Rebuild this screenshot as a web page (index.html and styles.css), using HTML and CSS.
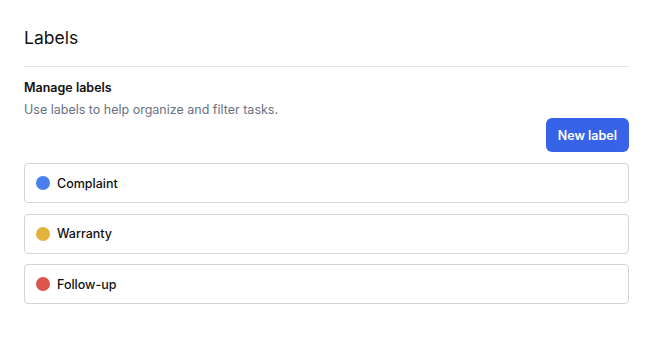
FILE: index.html
```html
<!DOCTYPE html>
<html lang="en">

<head>
  <meta charset="UTF-8">
  <title>Labels</title>
  <link rel="stylesheet" href="styles.css">
</head>

<body>
  <div class="settings-page">
    <h1 class="page-title">Labels</h1>
    <div class="section">
      <div class="section-head">
        <h2 class="section-title">Manage labels</h2>
        <p class="section-desc">Use labels to help organize and filter tasks.</p>
      </div>
      <div class="section-actions">
        <button class="btn-primary" type="button">New label</button>
      </div>
      <ul class="label-list">
        <li class="label-item">
          <span class="label-dot dot-blue"></span>
          <span class="label-name">Complaint</span>
        </li>
        <li class="label-item">
          <span class="label-dot dot-yellow"></span>
          <span class="label-name">Warranty</span>
        </li>
        <li class="label-item">
          <span class="label-dot dot-red"></span>
          <span class="label-name">Follow-up</span>
        </li>
      </ul>
    </div>
  </div>
</body>

</html>
```

FILE: styles.css
```css
* {
  box-sizing: border-box;
}
body {
  margin: 0;
  background-color: #ffffff;
  font-family: Inter, "Noto Sans", sans-serif;
  color: #111111;
}
.settings-page {
  width: 605px;
  margin-left: 24px;
  padding-top: 24px;
}
.page-title {
  margin: 0;
  font-size: 17.5px;
  line-height: 28px;
  font-weight: 400;
  padding-bottom: 14px;
  border-bottom: 1px solid #e4e4e7;
}
.section-head {
  margin-top: 11px;
}
.section-title {
  margin: 0;
  font-size: 12.5px;
  line-height: 20px;
  font-weight: 600;
}
.section-desc {
  margin: 4px 0 0;
  font-size: 12.5px;
  line-height: 16px;
  color: #6b7280;
}
.section-actions {
  display: flex;
  justify-content: flex-end;
  margin-top: 0;
}
.btn-primary {
  height: 34px;
  padding: 0 12px;
  border: none;
  border-radius: 6px;
  background-color: #3663e8;
  color: #ffffff;
  font-family: inherit;
  font-size: 12.5px;
  font-weight: 600;
}
.label-list {
  list-style: none;
  margin: 11px 0 0;
  padding: 0;
  display: flex;
  flex-direction: column;
  gap: 10.5px;
}
.label-item {
  display: flex;
  align-items: center;
  gap: 7px;
  height: 40px;
  padding: 0 11px;
  border: 1px solid #d4d4d8;
  border-radius: 4px;
}
.label-dot {
  width: 14px;
  height: 14px;
  border-radius: 50%;
}
.dot-blue {
  background-color: #4a7ff0;
}
.dot-yellow {
  background-color: #e2b43b;
}
.dot-red {
  background-color: #dc554b;
}
.label-name {
  font-size: 12.5px;
  font-weight: 500;
}
```
